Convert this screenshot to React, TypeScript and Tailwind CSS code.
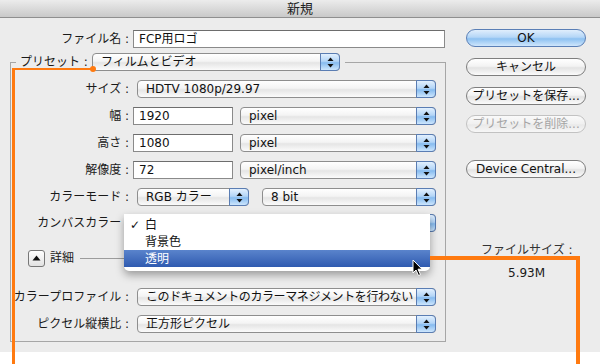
import React from 'react';

function Arrows() {
  return (
    <svg width="7" height="11" viewBox="0 0 7 11">
      <path d="M3.5 0.5 L6.5 4 L0.5 4 Z" fill="#111" />
      <path d="M0.5 7 L6.5 7 L3.5 10.5 Z" fill="#111" />
    </svg>
  );
}

function Popup({ text, className = '', textClass = '' }: { text: string; className?: string; textClass?: string }) {
  return (
    <div
      className={`flex h-[18px] items-stretch rounded-[4px] border border-[#8e8e8e] bg-[linear-gradient(to_bottom,#ffffff_0%,#f4f4f4_45%,#e5e5e5_55%,#fbfbfb_100%)] ${className}`}
    >
      <span className={`min-w-0 flex-1 overflow-hidden whitespace-nowrap pl-[8px] text-[12px] leading-[16px] text-[#111] ${textClass}`}>
        {text}
      </span>
      <span className="-my-px -mr-px flex w-[20px] shrink-0 items-center justify-center rounded-r-[4px] border border-[#5a7db3] bg-[linear-gradient(to_bottom,#e2f0fe_0%,#b3d5f7_45%,#86bbef_55%,#cde6fd_100%)]">
        <Arrows />
      </span>
    </div>
  );
}

function Field({ value, className = '' }: { value: string; className?: string }) {
  return (
    <input
      readOnly
      value={value}
      className={`h-[18px] border border-[#8a8a8a] border-t-[#6d6d6d] bg-white px-[5px] text-[12px] text-[#111] outline-none ${className}`}
    />
  );
}

function AquaButton({ label, kind = 'normal' }: { label: string; kind?: 'default' | 'normal' | 'disabled' }) {
  const look =
    kind === 'default'
      ? 'border-[#5a7fb6] bg-[linear-gradient(to_bottom,#e0eefc_0%,#b4d6f7_45%,#8dc1f1_55%,#cfe6fc_100%)] text-[#111]'
      : kind === 'disabled'
        ? 'border-[#c2c2c2] bg-[linear-gradient(to_bottom,#fafafa_0%,#f0f0f0_50%,#e9e9e9_55%,#f7f7f7_100%)] text-[#a5a5a5]'
        : 'border-[#7e7e7e] bg-[linear-gradient(to_bottom,#ffffff_0%,#f3f3f3_45%,#e3e3e3_55%,#fbfbfb_100%)] text-[#111]';
  return (
    <div className={`flex h-[18px] w-[120px] items-center justify-center rounded-full border text-[12px] ${look}`}>
      {label}
    </div>
  );
}

function Row({ label, children, className = '' }: { label: string; children: React.ReactNode; className?: string }) {
  return (
    <div className={`flex h-[18px] items-center ${className}`}>
      <span className="w-[118px] shrink-0 whitespace-nowrap text-right text-[12px] text-[#1a1a1a]">{label}</span>
      {children}
    </div>
  );
}

export default function App() {
  return (
    <div className="relative h-[364px] w-[600px] overflow-hidden bg-white font-[DejaVu_Sans,Noto_Sans_CJK_JP,sans-serif]">
      <div className="h-[352px] bg-[#ececec]">
        <div className="flex h-[18px] items-center justify-center border-b border-[#8f8f8f] bg-[linear-gradient(to_bottom,#ececec,#c9c9c9)] text-[13px] text-[#222]">
          新規
        </div>

        <div className="flex pt-[12px]">
          <div className="w-[446px] shrink-0">
            <div className="flex h-[18px] items-center">
              <span className="w-[129px] text-right text-[12px] text-[#1a1a1a]">ファイル名 :</span>
              <Field value="FCP用ロゴ" className="ml-[4px] w-[312px]" />
            </div>

            <div className="ml-[10px] mt-[14px] w-[436px] border border-[#a6a6a6] pb-[8px]">
              <div className="-mt-[10px] flex h-[18px]">
                <div className="ml-[5px] flex items-center bg-[#ececec] pl-[4px] pr-[5px]">
                  <span className="w-[72px] text-[12px] text-[#1a1a1a]">プリセット :</span>
                  <Popup text="フィルムとビデオ" className="w-[248px]" />
                </div>
              </div>

              <div className="mt-[9px] flex flex-col gap-[9px]">
                <Row label="サイズ :">
                  <Popup text="HDTV 1080p/29.97" className="ml-[8px] w-[299px]" />
                </Row>
                <Row label="幅 :">
                  <Field value="1920" className="ml-[4px] w-[100px]" />
                  <Popup text="pixel" className="ml-[7px] w-[196px]" />
                </Row>
                <Row label="高さ :">
                  <Field value="1080" className="ml-[4px] w-[100px]" />
                  <Popup text="pixel" className="ml-[7px] w-[196px]" />
                </Row>
                <Row label="解像度 :">
                  <Field value="72" className="ml-[4px] w-[100px]" />
                  <Popup text="pixel/inch" className="ml-[7px] w-[196px]" />
                </Row>
                <Row label="カラーモード :">
                  <Popup text="RGB カラー" className="ml-[8px] w-[112px]" />
                  <Popup text="8 bit" className="ml-[13px] w-[174px]" />
                </Row>
              </div>
              <Row label="カンバスカラー :" className="mt-[8px]">
                <Popup text="白" className="ml-[8px] w-[299px]" />
              </Row>

              <div className="mt-[17px] flex h-[18px] items-center">
                <div className="ml-[17px] flex h-[17px] w-[17px] items-center justify-center rounded-[3px] border border-[#777] bg-[linear-gradient(to_bottom,#ffffff,#e2e2e2)]">
                  <svg width="9" height="6" viewBox="0 0 9 6">
                    <path d="M4.5 0.5 L8.5 5.5 L0.5 5.5 Z" fill="#111" />
                  </svg>
                </div>
                <span className="ml-[5px] text-[12px] text-[#1a1a1a]">詳細</span>
                <div className="ml-[6px] h-px flex-1 bg-[#9c9c9c]" />
              </div>

              <div className="mt-[21px] flex flex-col gap-[9px]">
                <Row label="カラープロファイル :">
                  <Popup
                    text="このドキュメントのカラーマネジメントを行わない"
                    className="ml-[8px] w-[299px]"
                    textClass="pl-[6px] tracking-[-0.4px]"
                  />
                </Row>
                <Row label="ピクセル縦横比 :">
                  <Popup text="正方形ピクセル" className="ml-[8px] w-[299px]" />
                </Row>
              </div>
            </div>
          </div>

          <div className="ml-[20px] -mt-[1px] flex w-[120px] flex-col">
            <AquaButton label="OK" kind="default" />
            <div className="mt-[11px]">
              <AquaButton label="キャンセル" />
            </div>
            <div className="mt-[11px]">
              <AquaButton label="プリセットを保存..." />
            </div>
            <div className="mt-[10px]">
              <AquaButton label="プリセットを削除..." kind="disabled" />
            </div>
            <div className="mt-[27px]">
              <AquaButton label="Device Central..." />
            </div>
            <div className="mt-[63px] pl-[15px] text-[12px] text-[#333]">ファイルサイズ :</div>
            <div className="mt-[5px] pl-[42px] text-[12px] text-[#1a1a1a]">5.93M</div>
          </div>
        </div>
      </div>

      {/* canvas colour menu, open */}
      <div className="absolute left-[124px] top-[214px] w-[306px] rounded-b-[5px] bg-white pb-[4px] pt-[2px] text-[12px] text-[#111] shadow-[0_4px_9px_rgba(0,0,0,0.35)]">
        <div className="flex h-[17px] items-center">
          <span className="w-[21px] pl-[6px]">✓</span>
          <span>白</span>
        </div>
        <div className="flex h-[17px] items-center pl-[21px]">背景色</div>
        <div className="flex h-[17px] items-center bg-[linear-gradient(to_bottom,#5a84cc,#2f5ab0)] pl-[21px] text-white">透明</div>
      </div>

      {/* cursor */}
      <svg className="absolute left-[412px] top-[259px]" width="12" height="18" viewBox="0 0 12 18">
        <path d="M1 1 L1 14 L4 11 L6.5 16.5 L8.5 15.6 L6 10.2 L10 10.2 Z" fill="#000" stroke="#fff" strokeWidth="1" />
      </svg>

      {/* orange annotation lines */}
      <div className="absolute left-[12px] top-[68px] h-[2px] w-[82px] bg-[#ff7a10]" />
      <div className="absolute left-[90px] top-[66px] h-[6px] w-[6px] rounded-full bg-[#ff7a10]" />
      <div className="absolute left-[12px] top-[68px] h-[296px] w-[3px] bg-[#ff7a10]" />
      <div className="absolute left-[430px] top-[256px] h-[4px] w-[150px] bg-[#ff7a10]" />
      <div className="absolute left-[576px] top-[256px] h-[108px] w-[4px] bg-[#ff7a10]" />
    </div>
  );
}
